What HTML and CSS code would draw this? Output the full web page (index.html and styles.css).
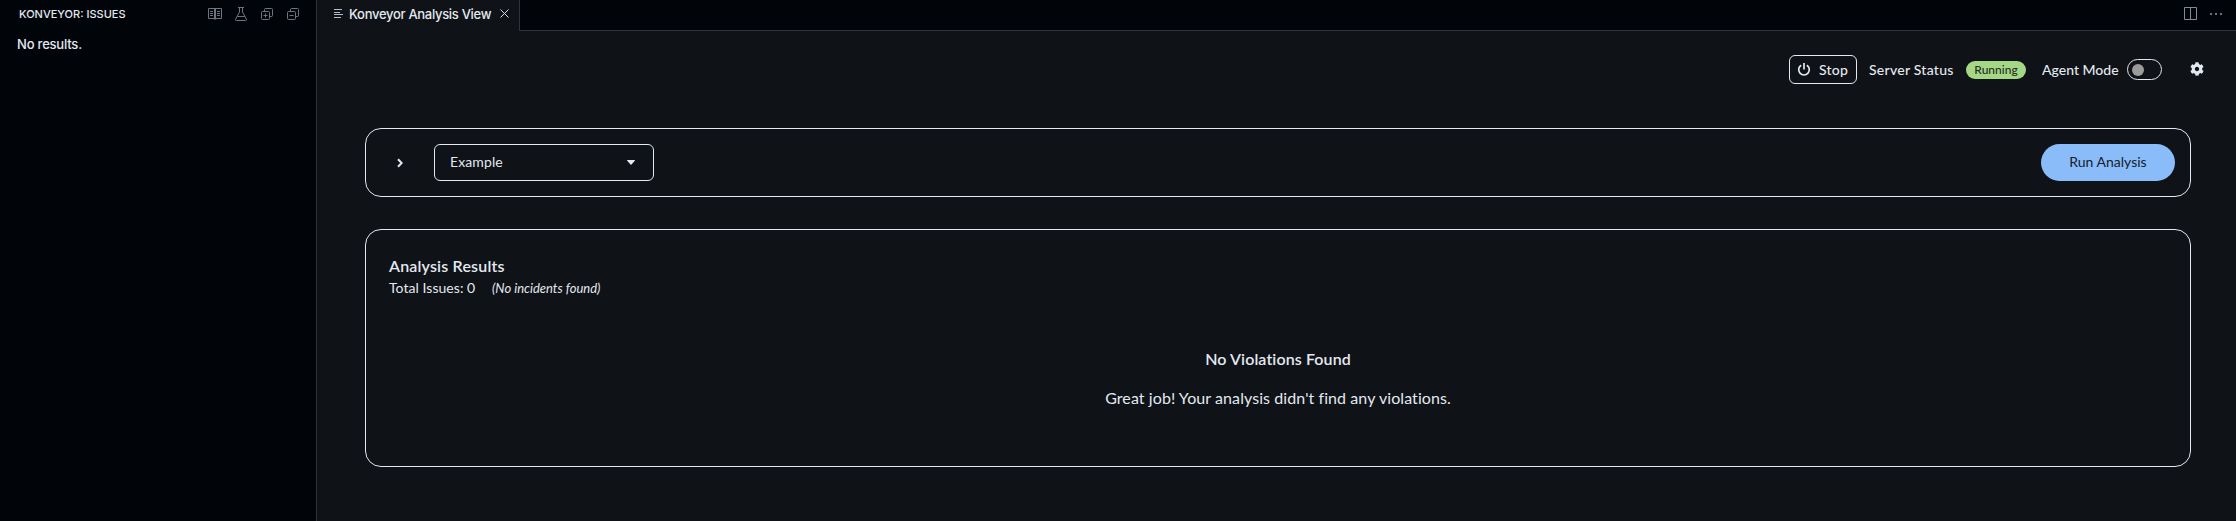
FILE: index.html
```html
<!DOCTYPE html>
<html lang="en">
<head>
<meta charset="utf-8">
<title>Konveyor Analysis View</title>
<link rel="stylesheet" href="styles.css">
</head>
<body>
<div class="window">
  <aside class="sidebar">
    <header class="side-head">
      <span class="side-title">KONVEYOR: ISSUES</span>
      <span class="side-actions">
        <svg width="14" height="14" viewBox="0 0 14 14"><path d="M.5 1.500h13v10H.5zM6.500 1.500v11M7.500 1.500v11M2 4.500h3M2 6.500h3M2 8.500h3M9 4.500h3M9 6.500h3M9 8.500h3"/></svg>
        <svg width="14" height="14" viewBox="0 0 14 14"><path d="M4 .5h6M5.500 .5v4.500L1.500 12.300q-.3 1.200.8 1.200h9.400q1.100 0 .8-1.200L8.500 5V.5M3.200 9.500h7.600"/></svg>
        <svg width="14" height="14" viewBox="0 0 14 14"><rect x="1.500" y="4.500" width="8" height="8" rx="1"/><path d="M4.500 4V2.500q0-1 1-1h6q1 0 1 1v6q0 1-1 1H10M5.500 6.500v4M3.500 8.500h4"/></svg>
        <svg width="14" height="14" viewBox="0 0 14 14"><rect x="1.500" y="4.500" width="8" height="8" rx="1"/><path d="M4.500 4V2.500q0-1 1-1h6q1 0 1 1v6q0 1-1 1H10M3.500 8.500h4"/></svg>
      </span>
    </header>
    <p class="side-empty">No results.</p>
  </aside>
  <main class="editor">
    <nav class="tabs">
      <div class="tab">
        <svg class="tab-icon" width="9" height="9" viewBox="0 0 9 9"><path d="M0 .5h8M0 3.500h6M0 5.500h9M0 8.500h7"/></svg>
        <span class="tab-label">Konveyor Analysis View</span>
        <svg class="tab-close" width="9" height="9" viewBox="0 0 9 9"><path d="M.5.5l8 8M8.500.5l-8 8"/></svg>
      </div>
      <div class="tab-rest">
        <svg width="13" height="13" viewBox="0 0 13 13"><path d="M.5.5h12v12H.5zM6.500.5v12"/></svg>
        <svg class="dots" width="12" height="13" viewBox="0 0 12 13"><path d="M0 6h2v2H0zM5 6h2v2H5zM10 6h2v2h-2z"/></svg>
      </div>
    </nav>
    <div class="toolbar">
      <button class="stop"><svg width="14" height="14" viewBox="0 0 14 14"><path d="M4.200 2.200a5.300 5.300 0 1 0 5.600 0M7 0v6.500"/></svg><span>Stop</span></button>
      <span class="status-label">Server Status</span>
      <span class="pill">Running</span>
      <span class="agent-label">Agent Mode</span>
      <span class="switch"></span>
      <svg class="gear" width="14" height="14" viewBox="0 0 512 512"><path d="M487.400 315.700l-42.600-24.600c4.300-23.200 4.300-47 0-70.200l42.600-24.600c4.900-2.800 7.100-8.600 5.500-14-11.100-35.600-30-67.800-54.700-94.600-3.800-4.100-10-5.100-14.800-2.300L380.800 110c-17.900-15.400-38.500-27.300-60.800-35.100V25.800c0-5.600-3.900-10.500-9.400-11.700-36.700-8.200-74.300-7.800-109.200 0-5.500 1.200-9.400 6.100-9.400 11.700V75c-22.200 7.900-42.800 19.800-60.800 35.100L88.700 85.500c-4.900-2.800-11-1.900-14.800 2.300-24.700 26.700-43.600 58.900-54.700 94.600-1.700 5.400.6 11.200 5.500 14L67.300 221c-4.300 23.200-4.300 47 0 70.200l-42.600 24.600c-4.900 2.800-7.100 8.600-5.500 14 11.100 35.600 30 67.800 54.700 94.600 3.800 4.100 10 5.100 14.800 2.300l42.600-24.600c17.900 15.400 38.500 27.300 60.800 35.100v49.200c0 5.600 3.900 10.500 9.400 11.700 36.700 8.200 74.300 7.800 109.200 0 5.500-1.200 9.400-6.100 9.400-11.700v-49.200c22.200-7.900 42.800-19.800 60.800-35.100l42.600 24.600c4.900 2.800 11 1.900 14.800-2.300 24.700-26.700 43.600-58.900 54.700-94.600 1.500-5.500-.7-11.300-5.600-14.100zM256 336c-44.100 0-80-35.900-80-80s35.900-80 80-80 80 35.900 80 80-35.900 80-80 80z"/></svg>
    </div>
    <section class="card runner">
      <svg class="chev" width="6" height="10" viewBox="0 0 6 10"><path d="M1 1.200L4.700 5 1 8.800"/></svg>
      <div class="select"><span>Example</span><svg width="8" height="5" viewBox="0 0 8 5"><path d="M.4 0h7.200q.6.2.2.8L4.500 4.600q-.5.500-1 0L.2.800Q-.2.200.4 0z"/></svg></div>
      <button class="run"><span>Run Analysis</span></button>
    </section>
    <section class="card results">
      <h2 class="results-title">Analysis Results</h2>
      <div class="summary"><span class="total">Total Issues: 0</span><em class="incidents">(No incidents found)</em></div>
      <div class="empty">
        <h3 class="empty-title">No Violations Found</h3>
        <p class="empty-text">Great job! Your analysis didn't find any violations.</p>
      </div>
    </section>
  </main>
</div>
</body>
</html>
```
FILE: styles.css
```css
* { box-sizing: border-box; }
body { margin: 0; background: #010409; color: #e3e9f0; font-family: Lato, sans-serif; white-space: nowrap; }
h2, h3, p { margin: 0; }
button { margin: 0; font: inherit; color: inherit; }
svg { display: block; flex: none; fill: none; }
.window { display: flex; width: 2236px; height: 521px; overflow: hidden; }
.sidebar { width: 317px; flex: none; background: #010409; border-right: 1px solid #30343a; font-family: Inter, sans-serif; }
.side-head { display: flex; justify-content: space-between; align-items: center; height: 28px; padding: 0 16px 0 19px; }
.side-title { font-size: 11px; letter-spacing: 0; font-weight: 500; }
.side-actions { display: flex; gap: 12px; }
.side-actions svg { stroke: #6d747e; }
.side-empty { padding: 7px 0 0 17px; font-size: 13px; line-height: 18px; font-weight: 500; letter-spacing: -0.2px; }
.editor { flex: 1; background: #0f1216; }
.tabs { display: flex; height: 31px; }
.tab { display: flex; align-items: center; width: 203px; height: 31px; padding: 0 10px 4px 17px; border-right: 1px solid #30343a; }
.tab-icon { stroke: #b6bcc4; }
.tab-label { margin-left: 6px; width: 151px; font-family: Inter, sans-serif; font-size: 13px; line-height: 18px; font-weight: 500; letter-spacing: -0.3px; }
.tab-close { stroke: #d8dee5; }
.tab-rest { flex: 1; display: flex; justify-content: flex-end; gap: 13px; padding: 7px 14px 0 0; background: #010409; border-bottom: 1px solid #30343a; }
.tab-rest svg { stroke: #848b95; }
.tab-rest .dots { fill: #6d747e; stroke: none; }
.toolbar { display: flex; align-items: center; height: 49px; margin-top: 14px; padding-left: 1472px; font-size: 14px; font-weight: 500; }
.stop { display: flex; align-items: center; width: 68px; height: 29px; padding: 0 0 0 7px; background: none; border: 1px solid #e3e9f0; border-radius: 6px; }
.stop svg { stroke: #e3e9f0; stroke-width: 1.7; }
.stop span { margin-left: 8px; letter-spacing: 0.2px; }
.status-label { width: 97px; margin-left: 12px; letter-spacing: 0.26px; }
.pill { width: 60px; height: 18px; border-radius: 9px; background: #a4d786; color: #26301f; font-size: 12px; line-height: 18px; text-align: center; }
.agent-label { width: 85px; margin-left: 16px; }
.switch { width: 35px; height: 21px; padding: 4px; border: 1px solid #e3e9f0; border-radius: 11px; }
.switch::before { content: ""; display: block; width: 12px; height: 12px; border-radius: 50%; background: #9b9b9b; }
.gear { margin-left: 28px; margin-top: -2px; fill: #e3e9f0; }
.card { width: 1826px; margin-left: 48px; border: 1px solid #e3e9f0; border-radius: 16px; }
.runner { display: flex; align-items: center; height: 69px; margin-top: 34px; padding: 0 15px 0 31px; font-size: 14px; }
.chev { stroke: #e3e9f0; stroke-width: 2; }
.select { display: flex; align-items: center; justify-content: space-between; width: 220px; height: 37px; margin-left: 31px; padding: 0 18px 0 15px; border: 1px solid #e3e9f0; border-radius: 6px; }
.select span { padding-bottom: 2px; letter-spacing: 0.1px; }
.select svg { fill: #e3e9f0; }
.run { width: 134px; height: 37px; margin-left: auto; padding: 0 0 2px; border: 0; border-radius: 19px; background: #89bcf9; color: #15202b; }
.results { height: 238px; margin-top: 32px; padding: 25px 23px; }
.results-title { font-size: 16px; line-height: 22px; font-weight: 600; letter-spacing: 0.18px; }
.summary { display: flex; align-items: center; height: 21px; font-size: 14px; }
.total { width: 103px; letter-spacing: 0.05px; }
.incidents { font-size: 13px; }
.empty { margin-top: 49px; text-align: center; }
.empty-title { font-size: 16px; line-height: 24px; font-weight: 600; letter-spacing: 0.1px; }
.empty-text { margin-top: 15px; font-size: 16px; line-height: 24px; letter-spacing: 0.08px; }
```
